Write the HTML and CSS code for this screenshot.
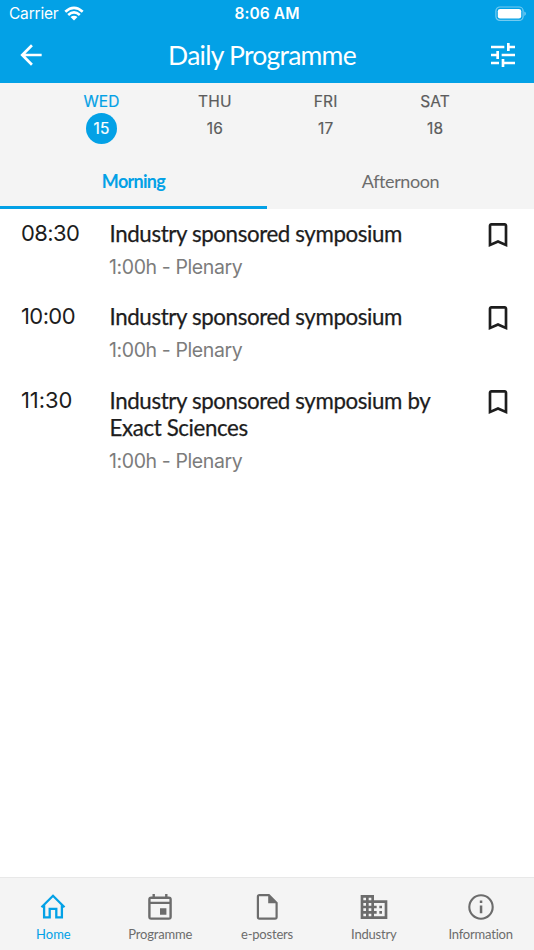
FILE: index.html
```html
<!DOCTYPE html>
<html lang="en">
<head>
<meta charset="utf-8">
<title>Daily Programme</title>
<link rel="stylesheet" href="styles.css">
</head>
<body>
<div class="app">
  <header class="header">
    <div class="status">
      <div class="carrier"><span>Carrier</span>
        <svg class="wifi" viewBox="0 0 20 15"><g fill="none" stroke="#fff" stroke-width="2.7"><path d="M1.3 5.7Q10-2.1 18.7 5.7"/><path d="M4.2 9Q10 3.9 15.8 9"/></g><path fill="#fff" d="M6.5 11.1Q10 8.2 13.5 11.1L10 14.6Z"/></svg>
      </div>
      <span class="clock">8:06 AM</span>
      <svg class="battery" viewBox="0 0 32 16"><rect x=".9" y="1" width="27.2" height="13.4" rx="4" fill="none" stroke="#fff" stroke-opacity=".45" stroke-width="1.2"/><rect x="2.8" y="2.9" width="23.4" height="9.6" rx="2.3" fill="#fff"/><path d="M29.4 5.5q1.4.6 1.4 2.2t-1.4 2.2z" fill="#fff" opacity=".5"/></svg>
    </div>
    <div class="toolbar">
      <svg class="icon" viewBox="0 0 24 24"><path d="M20 11H7.83l5.59-5.59L12 4l-8 8 8 8 1.41-1.41L7.83 13H20v-2z"/></svg>
      <h1 class="title">Daily Programme</h1>
      <svg class="icon" viewBox="0 0 24 24"><path d="M3 17v2h6v-2H3zM3 5v2h10V5H3zm10 16v-2h8v-2h-8v-2h-2v6h2zM7 9v2H3v2h4v2h2V9H7zm14 4v-2H11v2h10zm-6-4h2V7h4V5h-4V3h-2v6z"/></svg>
    </div>
  </header>
  <section class="filters">
    <div class="days">
      <div class="day active"><span>WED</span><span class="date">15</span></div>
      <div class="day"><span>THU</span><span class="date">16</span></div>
      <div class="day"><span>FRI</span><span class="date">17</span></div>
      <div class="day"><span>SAT</span><span class="date">18</span></div>
    </div>
    <div class="tabs">
      <div class="tab selected"><span>Morning</span></div>
      <div class="tab"><span>Afternoon</span></div>
    </div>
  </section>
  <main class="list">
    <article class="session">
      <time>08:30</time>
      <div class="details"><h2><span>Industry sponsored symposium</span></h2><p>1:00h - Plenary</p></div>
      <svg class="icon" viewBox="0 0 24 24"><path d="M17 3H7c-1.100 0-2 .9-2 2v16l7-3 7 3V5c0-1.100-.9-2-2-2zm0 15l-5-2.180L7 18V5h10v13z"/></svg>
    </article>
    <article class="session">
      <time>10:00</time>
      <div class="details"><h2><span>Industry sponsored symposium</span></h2><p>1:00h - Plenary</p></div>
      <svg class="icon" viewBox="0 0 24 24"><path d="M17 3H7c-1.100 0-2 .9-2 2v16l7-3 7 3V5c0-1.100-.9-2-2-2zm0 15l-5-2.180L7 18V5h10v13z"/></svg>
    </article>
    <article class="session">
      <time class="narrow">11:30</time>
      <div class="details"><h2><span>Industry sponsored symposium by</span><br><span>Exact Sciences</span></h2><p>1:00h - Plenary</p></div>
      <svg class="icon" viewBox="0 0 24 24"><path d="M17 3H7c-1.100 0-2 .9-2 2v16l7-3 7 3V5c0-1.100-.9-2-2-2zm0 15l-5-2.180L7 18V5h10v13z"/></svg>
    </article>
  </main>
  <nav class="nav">
    <div class="item current"><svg viewBox="0 0 32 32"><path d="M4.500 16.200 16 4.800l11.500 11.400M7.100 14v12.300h5.600v-8.400h6.600v8.400h5.600V14" fill="none" stroke="currentColor" stroke-width="2.300"/></svg><span>Home</span></div>
    <div class="item"><svg viewBox="0 0 32 32"><path fill="currentColor" fill-rule="evenodd" d="M8.500 3h2.400v2.600h10.200V3h2.400v2.600h1.300a3 3 0 0 1 3 3v17.200a3 3 0 0 1-3 3H7.200a3 3 0 0 1-3-3V8.600a3 3 0 0 1 3-3h1.300zM6.600 8v2.700h18.800V8zm0 4.900v13.500h18.800V12.900zM16 17.300h6.400v6.400H16z"/></svg><span>Programme</span></div>
    <div class="item"><svg viewBox="0 0 32 32"><path fill="currentColor" fill-rule="evenodd" d="M8.500 3h9.800l8.400 8.400v14.700a2.700 2.700 0 0 1-2.700 2.700H8.500a2.700 2.700 0 0 1-2.700-2.700V5.700A2.700 2.700 0 0 1 8.500 3zm-.5 2.200v21.400h16.500V12.300h-7.300V5.200z"/></svg><span>e-posters</span></div>
    <div class="item"><svg viewBox="0 0 24 24"><path fill="currentColor" d="M12 7V3H2v18h20V7H12zM6 19H4v-2h2v2zm0-4H4v-2h2v2zm0-4H4V9h2v2zm0-4H4V5h2v2zm4 12H8v-2h2v2zm0-4H8v-2h2v2zm0-4H8V9h2v2zm0-4H8V5h2v2zm10 12h-8v-2h2v-2h-2v-2h2v-2h-2V9h8v10zm-2-8h-2v2h2v-2zm0 4h-2v2h2v-2z"/></svg><span>Industry</span></div>
    <div class="item"><svg viewBox="0 0 32 32"><circle cx="16" cy="16" r="11.700" fill="none" stroke="currentColor" stroke-width="2.100"/><path fill="currentColor" d="M14.800 9.600h2.500v2.500h-2.500zM14.800 14.600h2.500v7.600h-2.500z"/></svg><span>Information</span></div>
  </nav>
</div>
</body>
</html>
```
FILE: styles.css
```css
* { box-sizing: border-box; }
body { margin: 0; background: #fff; color: #1d1d1d; font-family: Lato, sans-serif; font-variant-ligatures: none; }
svg { display: block; flex: none; }
h1, h2, p { margin: 0; font-weight: 400; }
.app { display: flex; flex-direction: column; height: 950px; width: 534px; overflow: hidden; }
.header { height: 83px; background: #03a1e6; color: #fff; }
.status { display: grid; grid-template-columns: 1fr auto 1fr; align-items: center; height: 27px; padding: 0 7px 0 9px; font: 15.500px/28px Inter, sans-serif; }
.carrier { display: flex; align-items: center; gap: 6px; letter-spacing: -.2px; }
.wifi { width: 20px; height: 15px; margin-top: -2px; }
.clock { font-weight: 600; letter-spacing: .1px; margin-right: 2px; }
.battery { width: 32px; height: 16px; margin-top: -1px; justify-self: end; }
.toolbar { display: flex; align-items: center; justify-content: space-between; height: 56px; padding: 0 15px; }
.icon { width: 32px; height: 32px; fill: currentColor; }
.title { font-size: 26.500px; line-height: 54px; letter-spacing: -.75px; margin-right: 10px; }
.filters { height: 126px; background: #f4f4f4; color: #6c6c6c; }
.days { display: flex; justify-content: center; gap: 78.500px; height: 70px; padding-top: 9px; font: 15.500px/20px Inter, sans-serif; -webkit-text-stroke: .2px currentColor; }
.day { display: flex; flex-direction: column; align-items: center; gap: 1px; letter-spacing: .15px; color: #5c5c5c; }
.date { width: 31px; height: 31px; border-radius: 50%; line-height: 31px; text-align: center; }
.day.active { color: #03a1e6; }
.active .date { background: #03a1e6; color: #fff; }
.tabs { display: grid; grid-template: 56px / 1fr 1fr; }
.tab { text-align: center; font-size: 18px; line-height: 56px; letter-spacing: -.4px; }
.selected { color: #03a1e6; font-weight: 700; letter-spacing: -.7px; border-bottom: 3px solid #03a1e6; }
.list { flex: 1; }
.session { display: grid; grid-template-columns: 88px 1fr 32px; padding: 10px 20.500px 12.400px 21px; align-items: start; }
.session time { font: 22px/28px Inter, sans-serif; letter-spacing: -.6px; }
.session .narrow { letter-spacing: -.1px; }
.session h2 { padding: 1px 0 0 .5px; font-size: 22.300px; line-height: 27px; letter-spacing: -.38px; -webkit-text-stroke: .25px currentColor; }
.session p { margin-top: 8px; padding-bottom: 1px; font: 19.500px/24px Inter, sans-serif; letter-spacing: -.4px; color: #7c7c7c; }
.nav { display: grid; grid-template-columns: repeat(5, 1fr); height: 73px; border-top: 1px solid #e8e8e8; background: #f4f4f4; color: #6c6c6c; }
.item { display: flex; flex-direction: column; align-items: center; padding-top: 13px; font-size: 13px; line-height: 22px; letter-spacing: -.2px; }
.item svg { width: 32px; height: 32px; }
.current { color: #03a1e6; letter-spacing: 0; }
```
